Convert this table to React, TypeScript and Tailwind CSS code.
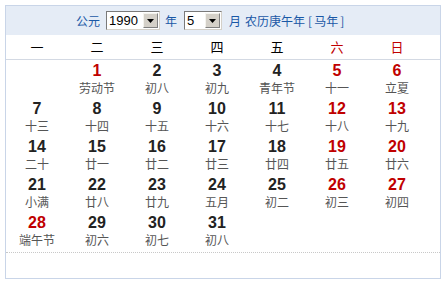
import React from "react";

type Cell = { d: number; l: string; red?: boolean } | null;

const rows: Cell[][] = [
  [null, { d: 1, l: "劳动节", red: true }, { d: 2, l: "初八" }, { d: 3, l: "初九" }, { d: 4, l: "青年节" }, { d: 5, l: "十一", red: true }, { d: 6, l: "立夏", red: true }],
  [{ d: 7, l: "十三" }, { d: 8, l: "十四" }, { d: 9, l: "十五" }, { d: 10, l: "十六" }, { d: 11, l: "十七" }, { d: 12, l: "十八", red: true }, { d: 13, l: "十九", red: true }],
  [{ d: 14, l: "二十" }, { d: 15, l: "廿一" }, { d: 16, l: "廿二" }, { d: 17, l: "廿三" }, { d: 18, l: "廿四" }, { d: 19, l: "廿五", red: true }, { d: 20, l: "廿六", red: true }],
  [{ d: 21, l: "小满" }, { d: 22, l: "廿八" }, { d: 23, l: "廿九" }, { d: 24, l: "五月" }, { d: 25, l: "初二" }, { d: 26, l: "初三", red: true }, { d: 27, l: "初四", red: true }],
  [{ d: 28, l: "端午节", red: true }, { d: 29, l: "初六" }, { d: 30, l: "初七" }, { d: 31, l: "初八" }, null, null, null],
];

const weekdays = ["一", "二", "三", "四", "五", "六", "日"];

function FakeSelect({ value, width }: { value: string; width: string }) {
  return (
    <div className={`inline-flex h-[19px] ${width} items-stretch border border-[#7a7a7a] border-r-[#d4d0c8] border-b-[#d4d0c8] bg-white`}>
      <span className="flex-1 pl-[2px] text-[13px] leading-[17px] text-black" style={{ fontFamily: '"Liberation Sans", Arial, sans-serif' }}>
        {value}
      </span>
      <span className="m-[1px] flex w-[15px] items-center justify-center border border-[#f4f3ee] border-r-[#808080] border-b-[#808080] bg-[#d4d0c8]">
        <svg width="7" height="4" viewBox="0 0 7 4">
          <polygon points="0,0 7,0 3.5,4" fill="#000" />
        </svg>
      </span>
    </div>
  );
}

export default function App() {
  const cjk = '"Noto Sans CJK SC", "Noto Sans", sans-serif';
  return (
    <div className="h-[283px] w-[445px] bg-white pl-[5px] pt-[5px]">
      <div className="h-[274px] w-[436px] border border-[#c9d5e8] bg-white" style={{ fontFamily: cjk }}>
        <div className="flex h-[29px] items-center bg-[#e5ecf6] pl-[70px] text-[12px] text-[#1a58a6]">
          <span>公元</span>
          <span className="ml-[6px]"><FakeSelect value="1990" width="w-[54px]" /></span>
          <span className="ml-[5px]">年</span>
          <span className="ml-[7px]"><FakeSelect value="5" width="w-[38px]" /></span>
          <span className="ml-[7px]">月</span>
          <span className="ml-[4px]">农历庚午年</span>
          <span className="ml-[3px]">[</span>
          <span className="ml-[2px]">马年</span>
          <span className="ml-[2px]">]</span>
        </div>
        <div className="grid h-[25px] grid-cols-[repeat(7,60px)] items-center border-b border-[#d3d9e3] pl-[1px] text-[13px]">
          {weekdays.map((w, i) => (
            <div key={w} className={`text-center ${i >= 5 ? "text-[#c00000]" : "text-black"}`}>
              {w}
            </div>
          ))}
        </div>
        <div className="pl-[1px]">
          {rows.map((r, ri) => (
            <div key={ri} className="grid h-[38px] grid-cols-[repeat(7,60px)] pt-[2px]">
              {r.map((c, ci) => (
                <div key={ci} className="flex flex-col items-center">
                  {c && (
                    <>
                      <span
                        className={`text-[16px] font-bold leading-[18px] ${c.red ? "text-[#c00000]" : "text-[#222]"}`}
                        style={{ fontFamily: '"Liberation Sans", Arial, sans-serif' }}
                      >
                        {c.d}
                      </span>
                      <span className="text-[12px] leading-[16px] text-[#555]">{c.l}</span>
                    </>
                  )}
                </div>
              ))}
            </div>
          ))}
        </div>
        <div className="mt-[2px] border-t border-dotted border-[#c8c8c8]" />
      </div>
    </div>
  );
}
